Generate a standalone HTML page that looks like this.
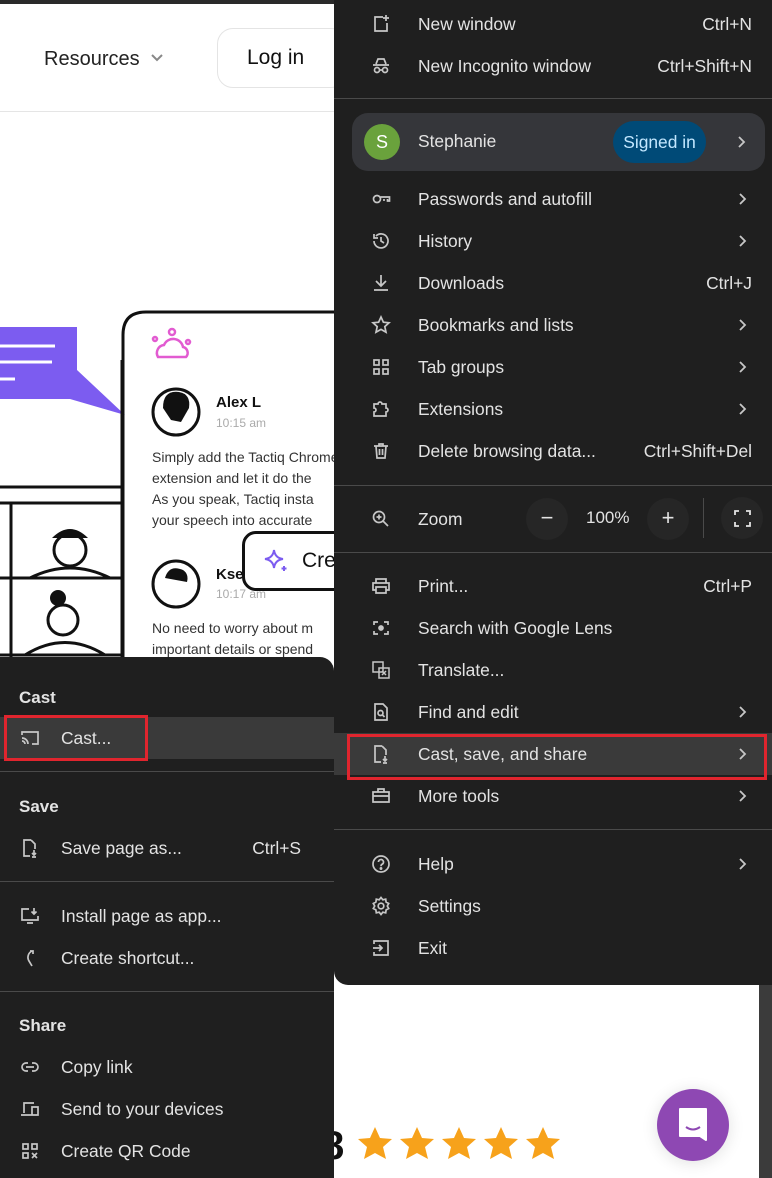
<!DOCTYPE html>
<html><head><meta charset="utf-8"><style>
*{margin:0;padding:0;box-sizing:border-box}
body{width:772px;height:1178px;position:relative;overflow:hidden;background:#fff;font-family:"Liberation Sans",Arial,sans-serif}
.a{position:absolute}
.menu{position:absolute;left:334px;top:0;width:438px;height:985px;background:#1f1f1f;border-bottom-left-radius:14px;color:#e3e3e3;font-size:17.4px}
.sub{position:absolute;left:0;top:657px;width:334px;height:521px;background:#1f1f1f;border-top-right-radius:14px;color:#e3e3e3;font-size:17.4px}
.r{position:absolute;left:0;right:0;height:42px;line-height:42px}
.r .t{position:absolute;left:84px}
.sub .r .t{left:61px}
.r .k{position:absolute;right:20px;color:#e3e3e3}
.r .c{position:absolute;right:24px;top:14px}
.r svg.i{position:absolute;left:37px;top:11px}
.sub .r svg.i{left:20px}
.sep{position:absolute;left:0;right:0;height:1px;background:#4a4a4a}
.h{position:absolute;left:19px;font-weight:bold;font-size:17px}
</style></head><body>
<div class="a" style="left:0;top:0;width:772px;height:4px;background:#2a2a2a"></div>
<div class="a" style="left:44px;top:48px;font-size:20px;color:#222">Resources</div>
<svg class="a" style="left:150px;top:53px" width="14" height="10"><path d="M2 2l5 5 5-5" stroke="#888" stroke-width="2" fill="none"/></svg>
<div class="a" style="left:217px;top:28px;width:130px;height:60px;border:1px solid #e4e4e4;border-radius:16px;font-size:21px;line-height:58px;padding-left:29px;color:#111;font-weight:500">Log in</div>
<div class="a" style="left:0;top:111px;width:334px;height:1px;background:#e5e5e5"></div>
<svg class="a" style="left:0;top:300px" width="334" height="360">
<path d="M0 27H77V70L125 115L70 99H0Z" fill="#7c5cf0"/>
<path d="M0 46H55M0 62H52M0 79H15" stroke="#fff" stroke-width="3"/>
<path d="M0 187H122M0 203H122M0 278H122M0 355H122M11 203V360M122 60V360" stroke="#111" stroke-width="3" fill="none"/>
<circle cx="70" cy="250" r="16" fill="#fff" stroke="#111" stroke-width="3"/><path d="M52 238q18-18 36 0" fill="#111"/>
<path d="M30 278q40-20 80 0" stroke="#111" stroke-width="3" fill="none"/>
<circle cx="63" cy="320" r="15" fill="#fff" stroke="#111" stroke-width="3"/><circle cx="58" cy="298" r="8" fill="#111"/>
<path d="M25 355q40-25 80 0" stroke="#111" stroke-width="3" fill="none"/>
<path d="M123 360V35Q123 12 146 12H334" stroke="#111" stroke-width="3" fill="none"/>
<g stroke="#e25bd1" stroke-width="2.5" fill="none"><path d="M158 57a8 8 0 0 1 6-12 10 10 0 0 1 19 2 6 6 0 0 1 3 10z"/><circle cx="172" cy="32" r="3"/><circle cx="155" cy="39" r="2"/><circle cx="188" cy="42" r="2"/></g>
<circle cx="176" cy="112" r="23" fill="#fff" stroke="#111" stroke-width="3"/><path d="M163 108q0-18 16-16 12 2 10 16l-8 14-10-2z" fill="#111"/>
<circle cx="176" cy="284" r="23" fill="#fff" stroke="#111" stroke-width="3"/><path d="M165 278q4-14 18-8 6 4 4 12" fill="#111"/>
</svg>
<div class="a" style="left:216px;top:394px;font-size:15px;font-weight:bold;color:#111">Alex L</div>
<div class="a" style="left:216px;top:416px;font-size:12px;color:#aaa">10:15 am</div>
<div class="a" style="left:152px;top:447px;font-size:14px;color:#333;line-height:21px;white-space:nowrap;overflow:hidden;width:182px">Simply add the Tactiq Chrome<br>extension and let it do the<br>As you speak, Tactiq insta<br>your speech into accurate</div>
<div class="a" style="left:216px;top:566px;font-size:15px;font-weight:bold;color:#111">Kse</div>
<div class="a" style="left:216px;top:587px;font-size:12px;color:#aaa">10:17 am</div>
<div class="a" style="left:152px;top:618px;font-size:14px;color:#333;line-height:21px;white-space:nowrap;overflow:hidden;width:182px">No need to worry about m<br>important details or spend</div>
<div class="a" style="left:242px;top:531px;width:110px;height:60px;border:3px solid #111;border-radius:14px;background:#fff;font-size:21px;line-height:54px;padding-left:57px;color:#111">Cre</div>
<svg class="a" style="left:263px;top:548px" width="26" height="26"><path d="M11 2q1 8 9 9-8 1-9 9-1-8-9-9 8-1 9-9z" stroke="#7c5cf0" stroke-width="2" fill="none"/><path d="M21 18v5M18.5 20.5h5" stroke="#7c5cf0" stroke-width="2"/></svg>
<div class="a" style="left:322px;top:1124px;font-size:40px;font-weight:bold;color:#111">8</div>
<svg class="a" style="left:357px;top:1126px" width="210" height="38">
<defs><path id="s" d="M18 1l5 11 12 1-9 8 3 12-11-6-11 6 3-12-9-8 12-1z" fill="#f7a21b"/></defs>
<use href="#s" x="0"/><use href="#s" x="42"/><use href="#s" x="84"/><use href="#s" x="126"/><use href="#s" x="168"/>
</svg>
<div class="a" style="left:657px;top:1089px;width:72px;height:72px;border-radius:50%;background:#8e48b3;box-shadow:0 2px 16px rgba(0,0,0,.12)"></div>
<svg class="a" style="left:677px;top:1106px" width="32" height="38"><path d="M3 3h26v31l-6-4H3z" fill="#fff" stroke="#fff" stroke-width="2" stroke-linejoin="round"/><path d="M9 21q7 5 14 0" stroke="#8e48b3" stroke-width="2" fill="none"/></svg>
<div class="a" style="left:759px;top:985px;width:13px;height:193px;background:#3b3b3b"></div>

<div class="menu">
<div class="r" style="top:3px"><svg class="i" width="20" height="20" fill="none" stroke="#c7c7c7" stroke-width="1.7"><path d="M12 3H4v14h12V9M15 1v6M12 4h6"/></svg><span class="t">New window</span><span class="k">Ctrl+N</span></div>
<div class="r" style="top:45px"><svg class="i" width="20" height="20" fill="none" stroke="#c7c7c7" stroke-width="1.7"><path d="M5 8l2-5h6l2 5M2 9h16"/><circle cx="6" cy="14" r="2.5"/><circle cx="14" cy="14" r="2.5"/><path d="M8.5 14h3"/></svg><span class="t">New Incognito window</span><span class="k">Ctrl+Shift+N</span></div>
<div class="sep" style="top:98px"></div>
<div class="a" style="left:18px;top:113px;width:413px;height:58px;border-radius:16px;background:#35363a"></div>
<div class="a" style="left:30px;top:124px;width:36px;height:36px;border-radius:50%;background:#6aa23c;color:#fff;text-align:center;line-height:36px;font-size:18px">S</div>
<div class="a" style="left:84px;top:131px">Stephanie</div>
<div class="a" style="left:279px;top:121px;width:93px;height:42px;border-radius:21px;background:#004a77;color:#c2e7ff;text-align:center;line-height:42px">Signed in</div>
<svg class="a" style="left:403px;top:135px" width="10" height="14"><path d="M2 2l5 5-5 5" stroke="#c7c7c7" stroke-width="1.8" fill="none"/></svg>
<div class="r" style="top:178px"><svg class="i" width="20" height="20" fill="none" stroke="#c7c7c7" stroke-width="1.7"><circle cx="6" cy="10" r="3.5"/><path d="M9.5 8h9v4h-2v-2M13 10v2"/></svg><span class="t">Passwords and autofill</span><svg class="c" width="10" height="14"><path d="M2 2l5 5-5 5" stroke="#c7c7c7" stroke-width="1.8" fill="none"/></svg></div>
<div class="r" style="top:220px"><svg class="i" width="20" height="20" fill="none" stroke="#c7c7c7" stroke-width="1.7"><path d="M3 10a7 7 0 1 0 2-5M3 3v4h4M10 6v4l3 2"/></svg><span class="t">History</span><svg class="c" width="10" height="14"><path d="M2 2l5 5-5 5" stroke="#c7c7c7" stroke-width="1.8" fill="none"/></svg></div>
<div class="r" style="top:262px"><svg class="i" width="20" height="20" fill="none" stroke="#c7c7c7" stroke-width="1.7"><path d="M10 2v10M5 8l5 5 5-5M3 17h14"/></svg><span class="t">Downloads</span><span class="k">Ctrl+J</span></div>
<div class="r" style="top:304px"><svg class="i" width="20" height="20" fill="none" stroke="#c7c7c7" stroke-width="1.7"><path d="M10 2l2.4 5.2 5.6.6-4.2 3.8 1.2 5.6L10 14.4 5 17.2l1.2-5.6L2 7.8l5.6-.6z"/></svg><span class="t">Bookmarks and lists</span><svg class="c" width="10" height="14"><path d="M2 2l5 5-5 5" stroke="#c7c7c7" stroke-width="1.8" fill="none"/></svg></div>
<div class="r" style="top:346px"><svg class="i" width="20" height="20" fill="none" stroke="#c7c7c7" stroke-width="1.7"><rect x="3" y="3" width="5" height="5"/><rect x="12" y="3" width="5" height="5"/><rect x="3" y="12" width="5" height="5"/><rect x="12" y="12" width="5" height="5"/></svg><span class="t">Tab groups</span><svg class="c" width="10" height="14"><path d="M2 2l5 5-5 5" stroke="#c7c7c7" stroke-width="1.8" fill="none"/></svg></div>
<div class="r" style="top:388px"><svg class="i" width="20" height="20" fill="none" stroke="#c7c7c7" stroke-width="1.7"><path d="M3 5h4a2 2 0 0 1 4 0h4v4a2 2 0 0 1 0 4v4H3v-4a2 2 0 0 0 0-4z"/></svg><span class="t">Extensions</span><svg class="c" width="10" height="14"><path d="M2 2l5 5-5 5" stroke="#c7c7c7" stroke-width="1.8" fill="none"/></svg></div>
<div class="r" style="top:430px"><svg class="i" width="20" height="20" fill="none" stroke="#c7c7c7" stroke-width="1.7"><path d="M3 5h14M8 5V3h4v2M5 5l1 12h8l1-12M8.5 8v6M11.5 8v6"/></svg><span class="t">Delete browsing data...</span><span class="k">Ctrl+Shift+Del</span></div>
<div class="sep" style="top:485px"></div>
<div class="r" style="top:498px"><svg class="i" width="20" height="20" fill="none" stroke="#c7c7c7" stroke-width="1.7"><circle cx="8" cy="8" r="5.5"/><path d="M12 12l5 5M8 5.5v5M5.5 8h5"/></svg><span class="t">Zoom</span></div>
<div class="a" style="left:192px;top:498px;width:42px;height:42px;border-radius:50%;background:#262626;text-align:center;line-height:40px;font-size:22px">−</div>
<div class="a" style="left:252px;top:508px;font-size:17px">100%</div>
<div class="a" style="left:313px;top:498px;width:42px;height:42px;border-radius:50%;background:#262626;text-align:center;line-height:40px;font-size:22px">+</div>
<div class="a" style="left:369px;top:498px;width:1px;height:40px;background:#4a4a4a"></div>
<div class="a" style="left:387px;top:497px;width:42px;height:42px;border-radius:50%;background:#262626"></div>
<svg class="a" style="left:400px;top:510px" width="17" height="17" fill="none" stroke="#e3e3e3" stroke-width="1.8"><path d="M1 5V1h4M12 1h4v4M16 12v4h-4M5 16H1v-4"/></svg>
<div class="sep" style="top:552px"></div>
<div class="r" style="top:565px"><svg class="i" width="20" height="20" fill="none" stroke="#c7c7c7" stroke-width="1.7"><path d="M5 7V3h10v4M5 14H2V7h16v7h-3M5 11h10v6H5z"/></svg><span class="t">Print...</span><span class="k">Ctrl+P</span></div>
<div class="r" style="top:607px"><svg class="i" width="20" height="20" fill="none" stroke="#c7c7c7" stroke-width="1.7"><path d="M3 7V4h4M13 4h4v3M17 13v3h-4M7 16H3v-3"/><circle cx="10" cy="10" r="2" fill="#c7c7c7"/></svg><span class="t">Search with Google Lens</span></div>
<div class="r" style="top:649px"><svg class="i" width="20" height="20" fill="none" stroke="#c7c7c7" stroke-width="1.5"><rect x="2" y="2" width="10" height="10"/><rect x="8" y="8" width="10" height="10"/><path d="M11 11l4 4M15 11l-4 4"/></svg><span class="t">Translate...</span></div>
<div class="r" style="top:691px"><svg class="i" width="20" height="20" fill="none" stroke="#c7c7c7" stroke-width="1.7"><path d="M4 2h8l4 4v12H4z"/><circle cx="9.5" cy="11" r="2.5"/><path d="M11.5 13l2 2"/></svg><span class="t">Find and edit</span><svg class="c" width="10" height="14"><path d="M2 2l5 5-5 5" stroke="#c7c7c7" stroke-width="1.8" fill="none"/></svg></div>
<div class="a" style="left:0;top:733px;width:438px;height:42px;background:#3a3a3a"></div>
<div class="a" style="left:13px;top:734px;width:420px;height:46px;border:3px solid #e0252e"></div>
<div class="r" style="top:733px"><svg class="i" width="20" height="20" fill="none" stroke="#c7c7c7" stroke-width="1.7"><path d="M11 2H4v16h6M11 2l4 4v5M14 12v5M12 15l2 2 2-2M12 19h4"/></svg><span class="t">Cast, save, and share</span><svg class="c" width="10" height="14"><path d="M2 2l5 5-5 5" stroke="#c7c7c7" stroke-width="1.8" fill="none"/></svg></div>
<div class="r" style="top:775px"><svg class="i" width="20" height="20" fill="none" stroke="#c7c7c7" stroke-width="1.7"><path d="M7 6V3h6v3M2 6h16v10H2zM2 10h16"/></svg><span class="t">More tools</span><svg class="c" width="10" height="14"><path d="M2 2l5 5-5 5" stroke="#c7c7c7" stroke-width="1.8" fill="none"/></svg></div>
<div class="sep" style="top:829px"></div>
<div class="r" style="top:843px"><svg class="i" width="20" height="20" fill="none" stroke="#c7c7c7" stroke-width="1.7"><circle cx="10" cy="10" r="8"/><path d="M7.5 8a2.5 2.5 0 1 1 3.5 2.3c-.8.4-1 1-1 2"/><circle cx="10" cy="14.5" r=".6" fill="#c7c7c7"/></svg><span class="t">Help</span><svg class="c" width="10" height="14"><path d="M2 2l5 5-5 5" stroke="#c7c7c7" stroke-width="1.8" fill="none"/></svg></div>
<div class="r" style="top:885px"><svg class="i" width="20" height="20" fill="none" stroke="#c7c7c7" stroke-width="1.7"><circle cx="10" cy="10" r="2.8"/><path d="M10 1.5l1.8 2.3 2.9-.6.4 2.9 2.6 1.4-1.4 2.5 1.4 2.5-2.6 1.4-.4 2.9-2.9-.6L10 18.5l-1.8-2.3-2.9.6-.4-2.9-2.6-1.4L3.7 10 2.3 7.5l2.6-1.4.4-2.9 2.9.6z"/></svg><span class="t">Settings</span></div>
<div class="r" style="top:927px"><svg class="i" width="20" height="20" fill="none" stroke="#c7c7c7" stroke-width="1.7"><path d="M3 6V3h14v14H3v-3M2 10h9M8 7l3 3-3 3"/></svg><span class="t">Exit</span></div>
</div>

<div class="sub">
<div class="h" style="top:31px">Cast</div>
<div class="a" style="left:0;top:60px;width:334px;height:42px;background:#3a3a3a"></div>
<div class="a" style="left:4px;top:58px;width:144px;height:46px;border:3px solid #e0252e"></div>
<div class="r" style="top:60px"><svg class="i" width="20" height="20" fill="none" stroke="#c7c7c7" stroke-width="1.7"><path d="M2 7V4h16v12h-6M2 10a6 6 0 0 1 6 6M2 13a3 3 0 0 1 3 3"/></svg><span class="t">Cast...</span></div>
<div class="sep" style="top:114px"></div>
<div class="h" style="top:140px">Save</div>
<div class="r" style="top:170px"><svg class="i" width="20" height="20" fill="none" stroke="#c7c7c7" stroke-width="1.7"><path d="M11 2H4v16h6M11 2l4 4v5M14 12v5M12 15l2 2 2-2M12 19h4"/></svg><span class="t">Save page as...</span><span class="k" style="right:33px">Ctrl+S</span></div>
<div class="sep" style="top:224px"></div>
<div class="r" style="top:238px"><svg class="i" width="20" height="20" fill="none" stroke="#c7c7c7" stroke-width="1.7"><path d="M9 3H2v11h16v-4M7 17h6M14 2v6M11.5 5.5L14 8l2.5-2.5"/></svg><span class="t">Install page as app...</span></div>
<div class="r" style="top:280px"><svg class="i" width="20" height="20" fill="none" stroke="#c7c7c7" stroke-width="1.7"><path d="M12 3a7 7 0 0 0-3 10l3 5M10 3h3v3"/></svg><span class="t">Create shortcut...</span></div>
<div class="sep" style="top:334px"></div>
<div class="h" style="top:359px">Share</div>
<div class="r" style="top:389px"><svg class="i" width="20" height="20" fill="none" stroke="#c7c7c7" stroke-width="1.7"><path d="M8 6H6a4 4 0 0 0 0 8h2M12 6h2a4 4 0 0 1 0 8h-2M6 10h8"/></svg><span class="t">Copy link</span></div>
<div class="r" style="top:431px"><svg class="i" width="20" height="20" fill="none" stroke="#c7c7c7" stroke-width="1.7"><path d="M4 14V4h10M1 16h12M12 8h6v8h-6z"/></svg><span class="t">Send to your devices</span></div>
<div class="r" style="top:473px"><svg class="i" width="20" height="20" fill="none" stroke="#c7c7c7" stroke-width="1.7"><rect x="3" y="3" width="5" height="5"/><rect x="12" y="3" width="5" height="5"/><rect x="3" y="12" width="5" height="5"/><path d="M12 12l5 5M17 12l-5 5"/></svg><span class="t">Create QR Code</span></div>
</div>
</body></html>
